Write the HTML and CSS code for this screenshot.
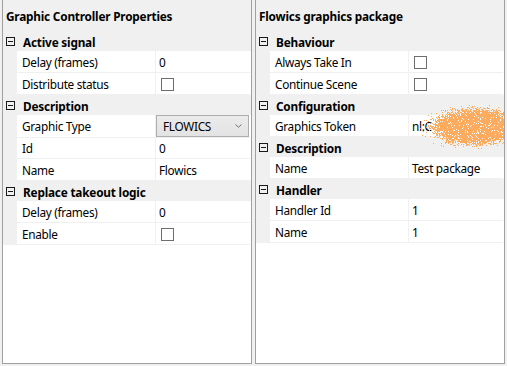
FILE: index.html
```html
<!DOCTYPE html>
<html>
<head>
<meta charset="utf-8">
<link rel="stylesheet" href="styles.css">
</head>
<body>
<div class="app">
  <section class="panel">
    <div class="title">Graphic Controller Properties</div>
    <div class="grid">
      <div class="cat"><span class="toggle"></span><span class="cat-name">Active signal</span></div>
      <div class="prop"><span class="gut"></span><span class="label">Delay (frames)</span><span class="value">0</span></div>
      <div class="prop"><span class="gut"></span><span class="label">Distribute status</span><span class="value"><span class="check"></span></span></div>
      <div class="cat"><span class="toggle"></span><span class="cat-name">Description</span></div>
      <div class="prop"><span class="gut"></span><span class="label">Graphic Type</span><span class="value combo-cell"><span class="combo"><span>FLOWICS</span><svg class="chev" width="7" height="4" viewBox="0 0 7 4"><path d="M0.5 0.5 L3.5 3.2 L6.5 0.5" fill="none" stroke="#707070" stroke-width="1"/></svg></span></span></div>
      <div class="prop"><span class="gut"></span><span class="label">Id</span><span class="value">0</span></div>
      <div class="prop"><span class="gut"></span><span class="label">Name</span><span class="value">Flowics</span></div>
      <div class="cat"><span class="toggle"></span><span class="cat-name">Replace takeout logic</span></div>
      <div class="prop"><span class="gut"></span><span class="label">Delay (frames)</span><span class="value">0</span></div>
      <div class="prop"><span class="gut"></span><span class="label">Enable</span><span class="value"><span class="check"></span></span></div>
    </div>
  </section>
  <section class="panel">
    <div class="title">Flowics graphics package</div>
    <div class="grid">
      <div class="cat"><span class="toggle"></span><span class="cat-name">Behaviour</span></div>
      <div class="prop"><span class="gut"></span><span class="label">Always Take In</span><span class="value"><span class="check"></span></span></div>
      <div class="prop"><span class="gut"></span><span class="label">Continue Scene</span><span class="value"><span class="check"></span></span></div>
      <div class="cat"><span class="toggle"></span><span class="cat-name">Configuration</span></div>
      <div class="prop"><span class="gut"></span><span class="label">Graphics Token</span><span class="value token">nl:C<svg class="blob" width="104" height="44" viewBox="0 0 104 44"><defs><radialGradient id="bg" cx="0.62" cy="0.5" r="0.58"><stop offset="0.55" stop-color="#000" stop-opacity="1"/><stop offset="1" stop-color="#000" stop-opacity="0"/></radialGradient><filter id="nz" x="0" y="0" width="100%" height="100%"><feTurbulence type="fractalNoise" baseFrequency="1.4" numOctaves="2" seed="4" result="t"/><feComposite in="SourceAlpha" in2="t" operator="arithmetic" k1="0" k2="1.2" k3="2.5" k4="-1.6" result="m"/><feComponentTransfer in="m" result="th"><feFuncA type="discrete" tableValues="0 1"/></feComponentTransfer><feFlood flood-color="#fdac5e"/><feComposite in2="th" operator="in"/></filter></defs><rect x="0" y="0" width="104" height="44" fill="url(#bg)" filter="url(#nz)"/></svg></span></div>
      <div class="cat"><span class="toggle"></span><span class="cat-name">Description</span></div>
      <div class="prop"><span class="gut"></span><span class="label">Name</span><span class="value">Test package</span></div>
      <div class="cat"><span class="toggle"></span><span class="cat-name">Handler</span></div>
      <div class="prop"><span class="gut"></span><span class="label">Handler Id</span><span class="value">1</span></div>
      <div class="prop"><span class="gut"></span><span class="label">Name</span><span class="value">1</span></div>
    </div>
  </section>
</div>
</body>
</html>
```

FILE: styles.css
```css
html, body {
  margin: 0;
  padding: 0;
  background: #f0f0f0;
}
body {
  font-family: "Noto Sans", "Liberation Sans", sans-serif;
  font-size: 11.8px;
  letter-spacing: -0.3px;
  color: #000;
  width: 507px;
  height: 366px;
  overflow: hidden;
}
.app {
  display: flex;
  gap: 3px;
  padding-left: 2px;
}
.panel {
  width: 250px;
  height: 364px;
  box-sizing: border-box;
  border: 1px solid #a0a0a0;
  border-top: none;
  background: #fff;
  overflow: hidden;
  display: flex;
  flex-direction: column;
}
.title {
  height: 31px;
  background: #f0f0f0;
  font-weight: bold;
  letter-spacing: -0.2px;
  line-height: 32px;
  padding-left: 3px;
  flex: none;
}
.grid {
  display: flex;
  flex-direction: column;
}
.cat {
  height: 20px;
  background: #f0f0f0;
  display: flex;
  align-items: center;
  font-weight: bold;
  letter-spacing: -0.2px;
}
.cat-name {
  padding-top: 1px;
}
.toggle {
  width: 9px;
  height: 9px;
  box-sizing: border-box;
  border: 1px solid #1a1a1a;
  margin-left: 3px;
  margin-right: 8px;
  position: relative;
  flex: none;
}
.toggle::after {
  content: "";
  position: absolute;
  left: 1px;
  top: 3px;
  width: 5px;
  height: 1px;
  background: #1a1a1a;
}
.prop {
  display: grid;
  grid-template-columns: 14px 139px 94px;
  height: 22px;
}
.gut {
  background: #f0f0f0;
}
.label {
  border-right: 1px solid #f0f0f0;
  border-bottom: 1px solid #f0f0f0;
  padding-left: 5px;
  padding-top: 1px;
  line-height: 20px;
  white-space: nowrap;
  overflow: hidden;
}
.value {
  border-bottom: 1px solid #f0f0f0;
  padding-left: 3px;
  padding-top: 1px;
  line-height: 20px;
  white-space: nowrap;
  display: flex;
  align-items: center;
  position: relative;
}
.check {
  width: 13px;
  height: 13px;
  box-sizing: border-box;
  border: 1px solid #6e6e6e;
  background: #fff;
  margin-left: 2px;
}
.combo-cell {
  padding-left: 0;
  padding-top: 0;
  align-items: stretch;
}
.combo {
  flex: 1;
  margin-right: 1px;
  box-sizing: border-box;
  border: 1px solid #adadad;
  background: linear-gradient(#ebebeb, #e3e3e3);
  display: flex;
  align-items: center;
  justify-content: space-between;
  padding-left: 6px;
  padding-right: 6px;
}
.chev {
  display: block;
}
.token {
  overflow: visible;
}
.blob {
  position: absolute;
  left: 1px;
  top: -10px;
}
```
